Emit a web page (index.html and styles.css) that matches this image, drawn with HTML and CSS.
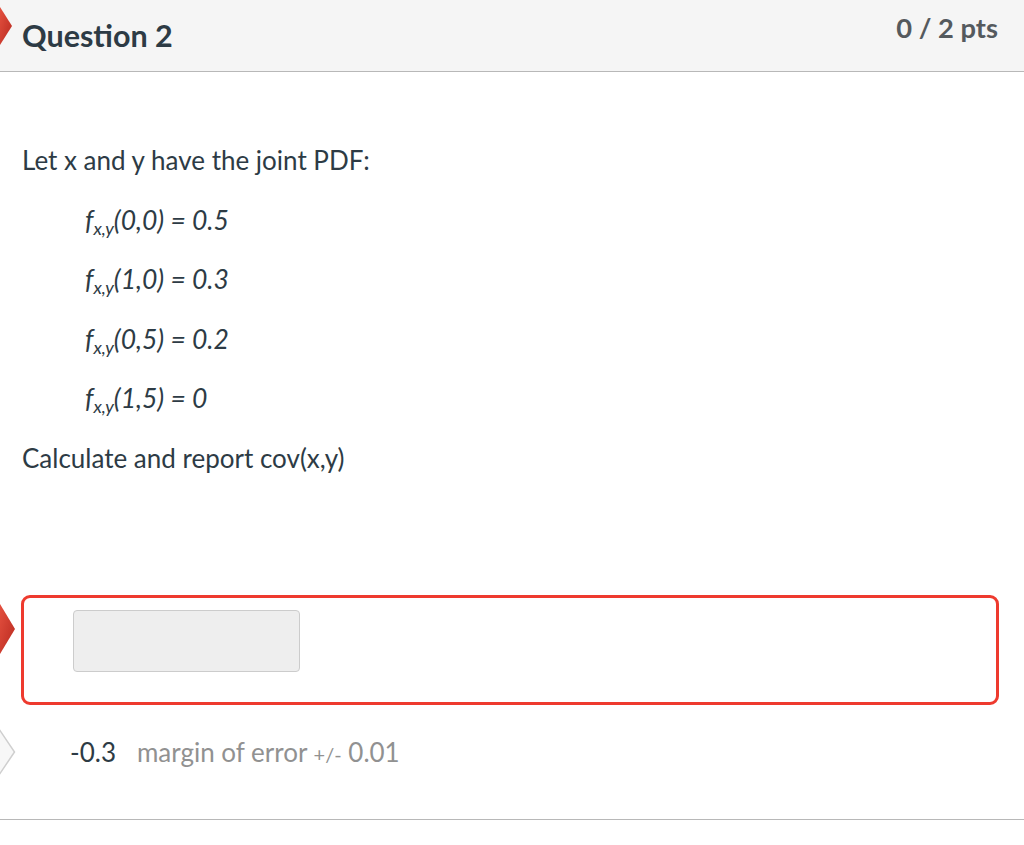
FILE: index.html
```html
<!DOCTYPE html>
<html>
<head>
<meta charset="utf-8">
<link rel="stylesheet" href="styles.css">
</head>
<body>
<div class="question">
  <div class="header">
    <svg class="arrow arrow-header" width="14" height="42" viewBox="0 0 14 42">
      <defs>
        <linearGradient id="redg" x1="0" y1="0" x2="1" y2="1">
          <stop offset="0" stop-color="#e4503f"/>
          <stop offset="1" stop-color="#b8291f"/>
        </linearGradient>
      </defs>
      <polygon points="0,2 12,21 0,40" fill="url(#redg)"/>
    </svg>
    <h2 class="title">Question 2</h2>
    <span class="pts">0 / 2 pts</span>
  </div>
  <div class="content">
    <p class="text">Let x and y have the joint PDF:</p>
    <p class="formula"><i>f<sub>x,y</sub>(0,0) = 0.5</i></p>
    <p class="formula"><i>f<sub>x,y</sub>(1,0) = 0.3</i></p>
    <p class="formula"><i>f<sub>x,y</sub>(0,5) = 0.2</i></p>
    <p class="formula"><i>f<sub>x,y</sub>(1,5) = 0</i></p>
    <p class="text">Calculate and report cov(x,y)</p>
  </div>
  <div class="answers">
    <div class="answer-box">
      <svg class="arrow arrow-wrong" width="18" height="54" viewBox="0 0 18 54">
        <defs>
          <linearGradient id="redg2" x1="0" y1="0" x2="1" y2="1">
            <stop offset="0" stop-color="#e4503f"/>
            <stop offset="1" stop-color="#b8291f"/>
          </linearGradient>
        </defs>
        <polygon points="0,2 15,27 0,52" fill="url(#redg2)"/>
      </svg>
      <div class="input"></div>
    </div>
    <div class="correct-row">
      <svg class="arrow arrow-correct" width="18" height="52" viewBox="0 0 18 52">
        <polygon points="-1,2 14.5,25 -1,48" fill="#f7f7f7" stroke="#cfcfcf" stroke-width="1.5"/>
      </svg>
      <span class="value">-0.3</span>
      <span class="margin">margin of error <small>+/-</small> 0.01</span>
    </div>
  </div>
  <div class="footer"></div>
</div>
</body>
</html>
```
FILE: styles.css
```css
html, body {
  margin: 0;
  padding: 0;
  background: #ffffff;
}
body {
  font-family: Lato, "Open Sans", sans-serif;
  color: #2d3b45;
  width: 1024px;
  height: 845px;
  overflow: hidden;
}
.question {
  position: relative;
}
.header {
  position: relative;
  height: 71px;
  background: #f5f5f5;
  border-bottom: 1px solid #b8b8b8;
  display: flex;
  align-items: flex-start;
  justify-content: space-between;
  padding: 0 26px 0 22px;
}
.title {
  margin: 16px 0 0 0;
  font-size: 30.5px;
  font-weight: 700;
  line-height: 38px;
  color: #2d3b45;
}
.pts {
  margin-top: 10px;
  font-size: 27.3px;
  font-weight: 700;
  line-height: 36px;
  color: #555a5e;
}
.content {
  padding: 70px 22px 0 22px;
}
.content p {
  margin: 0 0 23.5px 0;
  font-size: 26px;
  line-height: 36px;
}
.content p.formula {
  padding-left: 63px;
  font-size: 26.5px;
}
.formula sub {
  font-size: 18px;
  vertical-align: -5px;
  line-height: 0;
}
.answers {
  padding: 96px 0 0 21px;
}
.answer-box {
  position: relative;
  width: 978px;
  height: 110px;
  box-sizing: border-box;
  border: 3px solid #ee3a2e;
  border-radius: 9px;
  padding: 12px 0 0 49px;
}
.input {
  width: 227px;
  height: 62px;
  box-sizing: border-box;
  background: #eeeeee;
  border: 1px solid #cccccc;
  border-radius: 4px;
}
.correct-row {
  position: relative;
  display: flex;
  align-items: center;
  height: 48px;
  margin-top: 23px;
  padding-left: 49px;
  font-size: 26px;
}
.value {
  color: #2d3b45;
  margin-right: 21px;
}
.margin {
  color: #919191;
}
.margin small {
  font-size: 20px;
}
.footer {
  margin-top: 43px;
  border-top: 1px solid #b8b8b8;
}
.arrow {
  position: absolute;
}
.arrow-header {
  left: 0;
  top: 5px;
}
.arrow-wrong {
  left: -24px;
  top: 4px;
}
.arrow-correct {
  left: -21px;
  top: -1px;
}
```
